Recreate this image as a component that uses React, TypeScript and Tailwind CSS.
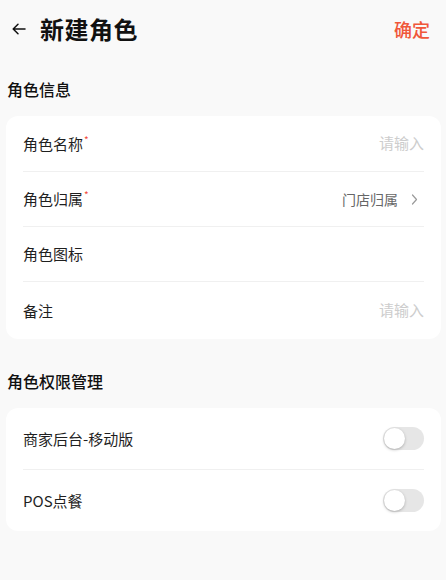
import React from "react";

const font = { fontFamily: '"Noto Sans CJK SC", "Noto Sans", sans-serif' };

function Row({ label, required, right, last, h = "h-[55px]" }: { label: string; required?: boolean; right?: React.ReactNode; last?: boolean; h?: string }) {
  return (
    <div className={`flex items-center justify-between ${h} ${last ? "" : "border-b border-[#f0f0f0]"}`}>
      <div className="flex items-start text-[15px] leading-[22px] text-[#1f1f1f]">
        <span>{label}</span>
        {required && <span className="text-[10px] leading-[14px] text-[#f24a3a] ml-[1px]">*</span>}
      </div>
      {right}
    </div>
  );
}

function Toggle() {
  return (
    <div className="w-[41px] h-[23px] rounded-full bg-[#e6e6e6] flex items-center px-[1px]">
      <div className="w-[21px] h-[21px] rounded-full bg-white shadow-[0_1px_3px_rgba(0,0,0,0.25)]" />
    </div>
  );
}

export default function App() {
  const placeholder = <span className="text-[15px] text-[#cdcdcd]">请输入</span>;
  return (
    <div className="w-[446px] h-[580px] bg-[#f9f9f9] overflow-hidden" style={font}>
      <div className="h-[58px] flex items-center justify-between pl-[11px] pr-[16px]">
        <div className="flex items-center">
          <svg width="16" height="16" viewBox="0 0 16 16" fill="none" stroke="#111" strokeWidth="1.5" strokeLinecap="round" strokeLinejoin="round">
            <path d="M14 8H2.5M7 3.2L2.2 8L7 12.8" />
          </svg>
          <span className="ml-[13px] text-[24px] font-bold text-[#111] tracking-[0.5px]">新建角色</span>
        </div>
        <span className="text-[18px] font-medium text-[#f0573a]">确定</span>
      </div>
      <div className="pt-[19px] pb-[15px] pl-[7px] text-[16px] leading-[24px] font-medium text-[#111]">角色信息</div>
      <div className="ml-[6px] mr-[5px] bg-white rounded-[12px] px-[17px]">
        <Row label="角色名称" required right={placeholder} h="h-[56px]" />
        <Row
          label="角色归属"
          required
          right={
            <div className="flex items-center text-[14px] text-[#666]">
              <span>门店归属</span>
              <svg className="ml-[13px] mr-[6px]" width="7" height="11" viewBox="0 0 7 11" fill="none" stroke="#9a9a9a" strokeWidth="1.2" strokeLinecap="round" strokeLinejoin="round">
                <path d="M1.5 1L5.5 5.5L1.5 10" />
              </svg>
            </div>
          }
        />
        <Row label="角色图标" />
        <Row label="备注" right={placeholder} last h="h-[57px]" />
      </div>
      <div className="pt-[30px] pb-[15px] pl-[7px] text-[16px] leading-[24px] font-medium text-[#111]">角色权限管理</div>
      <div className="ml-[6px] mr-[5px] bg-white rounded-[12px] px-[17px]">
        <Row label="商家后台-移动版" right={<Toggle />} h="h-[62px]" />
        <Row label="POS点餐" right={<Toggle />} last h="h-[61px]" />
      </div>
    </div>
  );
}
